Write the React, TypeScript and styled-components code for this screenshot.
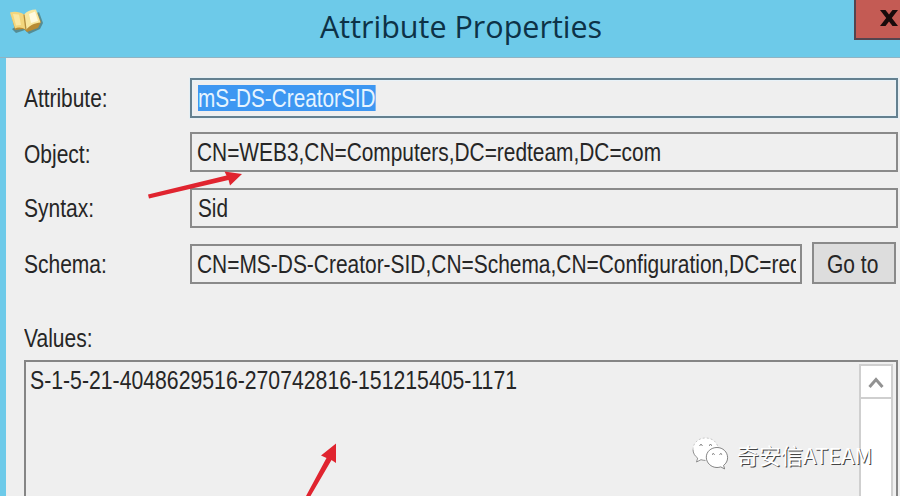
import React from 'react';
import styled, { createGlobalStyle } from 'styled-components';

const GlobalStyle = createGlobalStyle`
  * { box-sizing: border-box; }
  html, body { margin: 0; padding: 0; overflow: hidden; }
`;

const Window = styled.div`
  position: relative;
  width: 900px;
  height: 496px;
  overflow: hidden;
  display: flex;
  flex-direction: column;
  background: #6dcae9;
  font-family: 'Liberation Sans', Arial, sans-serif;
  font-size: 25px;
  color: #262626;
`;

const TitleBar = styled.header`
  flex: none;
  height: 58px;
  display: grid;
  grid-template-columns: 320px 1fr 46px;
  align-items: start;
  border-bottom: 1px solid #8fb4c4;
`;

const TitleIcon = styled.div`
  padding: 8px 0 0 9px;
  height: 40px;
`;

const Title = styled.h1`
  margin: 0;
  padding-top: 6px;
  font: 400 30.5px/41px 'Open Sans', 'Noto Sans', sans-serif;
  color: #0d3247;
  white-space: nowrap;
`;

const CloseButton = styled.button`
  width: 60px;
  height: 40px;
  margin: 0;
  padding: 10px 0 0 24px;
  border: 2px solid #54454f;
  border-top: 0;
  background: #c45b54;
  display: flex;
  align-items: flex-start;
  justify-content: flex-start;
`;

const Body = styled.main`
  flex: 1;
  margin-left: 6px;
  padding: 20px 2px 0 18px;
  background: #efefef;
  display: flex;
  flex-direction: column;
`;

const Row = styled.div<{ $gap: number }>`
  display: grid;
  grid-template-columns: 166px 1fr;
  height: 40px;
  margin-bottom: ${(p) => p.$gap}px;
`;

const Text = styled.span<{ $scale: number; $selected?: boolean }>`
  display: inline-block;
  transform: scaleX(${(p) => p.$scale});
  transform-origin: 0 50%;
  white-space: nowrap;
  line-height: 26px;
  height: 26px;
  color: ${(p) => (p.$selected ? '#e6f4ff' : 'inherit')};
  background: ${(p) => (p.$selected ? '#3d97f2' : 'transparent')};
`;

const Label = styled.label<{ $top: number }>`
  padding-top: ${(p) => p.$top}px;
  line-height: 0;
`;

const Field = styled.div<{ $focused?: boolean; $indent?: number }>`
  height: 40px;
  min-width: 0;
  padding: 5px 4px 0 ${(p) => p.$indent ?? 5}px;
  border: 2px solid ${(p) => (p.$focused ? '#64808f' : '#8a8a8a')};
  box-shadow: ${(p) => (p.$focused ? 'inset 0 0 0 1px #e8f2f8, 0 0 0 1px #e6f0f5' : 'none')};
`;

const Clip = styled.div`
  overflow: hidden;
  height: 29px;
  line-height: 0;
`;

const FieldWithButton = styled.div`
  display: grid;
  grid-template-columns: 612px 84px;
  column-gap: 10px;
  align-items: start;
`;

const GoButton = styled.button`
  height: 42px;
  margin: -2px 0 0;
  padding: 7px 0 0 13px;
  border: 2px solid #8a8a8a;
  background: #dddddd;
  font: inherit;
  color: inherit;
  line-height: 0;
  display: flex;
  align-items: flex-start;
  justify-content: flex-start;
`;

const ValuesLabel = styled.div`
  height: 76px;
  padding-top: 41px;
  line-height: 0;
`;

const ValuesBox = styled.div`
  flex: 1;
  display: flex;
  justify-content: space-between;
  padding: 2px 3px 0 4px;
  border: 2px solid #858585;
  border-bottom: 0;
`;

const ValueItem = styled.div`
  padding-top: 3px;
  line-height: 0;
`;

const ScrollBar = styled.div`
  width: 34px;
  flex: none;
  background: #fff;
  border: 2px solid #cfcfcf;
  border-bottom: 0;
`;

const ScrollUp = styled.div`
  height: 33px;
  padding-top: 2px;
  border-bottom: 2px solid #cfcfcf;
  display: flex;
  align-items: center;
  justify-content: center;
`;

const Annotations = styled.svg`
  position: absolute;
  inset: 0;
  pointer-events: none;
`;

const Watermark = styled.div`
  position: absolute;
  left: 690px;
  top: 435px;
  display: flex;
  align-items: flex-start;
  gap: 7px;
  color: #fff;
  font: 400 22px/38px 'Noto Sans CJK SC', sans-serif;
  white-space: nowrap;
  text-shadow: 1px 1px 0 #444;
`;

const BookIcon = () => (
  <svg width="36" height="30" viewBox="0 0 36 30">
    <path d="M3 21 7 25 16 22 20 26 31 21 34 15 30 4z" fill="#4d7775" opacity=".75" />
    <path d="M2 6 6 22 15 21 18 24 29 20 32 14 28 4 17 9z" fill="#b88b35" />
    <path d="M1 4.500C5 3 11 3.500 15 6.500L17 22C13 19 9 19 6 20.500z" fill="#f3d67d" />
    <path d="M15 6.500C18 3 22 1.500 27 1.500L31.500 14.500C26 15 21 17 17 22z" fill="#f8e7a0" />
    <path d="M20 6 26 3.500 29 13 22 15z" fill="#fffadf" />
    <path d="M4 6 10 6.500 12 17 7 17.500z" fill="#fae8a4" />
    <path d="M15 6.500 17 22" stroke="#b48d3c" strokeWidth="1.300" />
  </svg>
);

const WeChatIcon = () => (
  <svg width="40" height="38" viewBox="0 0 40 38">
    <path
      d="M15.500 3C8.500 3 3 8 3 14.500c0 3.500 1.800 6.500 4.700 8.600L6.500 27l4.500-2.300c1.500.5 3 .7 4.500.7 7 0 12.500-4.700 12.500-11S22.500 3 15.500 3z"
      fill="#fff"
    />
    <path d="M3 14.500c0 3.500 1.800 6.500 4.700 8.600L6.500 27l4.500-2.300c1.500.5 3 .7 4.500.7" fill="none" stroke="#777" strokeWidth=".8" />
    <path d="M3 14.500C3 8 8.500 3 15.500 3S26.500 7 28 12" fill="none" stroke="#aaa" strokeWidth=".6" strokeDasharray="2 2" />
    <path
      d="M27 12.500c-6 0-10.700 4.200-10.700 9.700S21 32.500 27 32.500c1.300 0 2.500-.2 3.700-.6l3.900 2-1-3.500c2.500-1.800 4-4.600 4-7.700 0-5.700-4.700-10.200-10.600-10.200z"
      fill="#fff" stroke="#666" strokeWidth=".8"
    />
    <path d="M9.500 10.500q1.500-2 3 0M19 10.500q1.500-2 3 0M22 19.500q1.300-1.800 2.600 0M29.500 19.500q1.300-1.800 2.600 0" fill="none" stroke="#666" />
  </svg>
);

export default function App() {
  return (
    <>
      <GlobalStyle />
      <Window>
        <TitleBar>
          <TitleIcon><BookIcon /></TitleIcon>
          <Title>Attribute Properties</Title>
          <CloseButton aria-label="Close">
            <svg width="18" height="16" viewBox="0 0 18 16">
              <path d="M0 0h5.500L9 4.500 12.500 0H18l-6.200 8L18 16h-5.500L9 11.500 5.500 16H0l6.200-8z" fill="#180b0b" />
            </svg>
          </CloseButton>
        </TitleBar>
        <Body>
          <Row $gap={14}>
            <Label $top={7}><Text $scale={0.835}>Attribute:</Text></Label>
            <Field $focused $indent={6}><Clip><Text $scale={0.83} $selected>mS-DS-CreatorSID</Text></Clip></Field>
          </Row>
          <Row $gap={16}>
            <Label $top={9}><Text $scale={0.84}>Object:</Text></Label>
            <Field><Clip><Text $scale={0.835}>CN=WEB3,CN=Computers,DC=redteam,DC=com</Text></Clip></Field>
          </Row>
          <Row $gap={16}>
            <Label $top={7}><Text $scale={0.84}>Syntax:</Text></Label>
            <Field $indent={6}><Clip><Text $scale={0.83}>Sid</Text></Clip></Field>
          </Row>
          <Row $gap={0}>
            <Label $top={7}><Text $scale={0.84}>Schema:</Text></Label>
            <FieldWithButton>
              <Field><Clip><Text $scale={0.837}>CN=MS-DS-Creator-SID,CN=Schema,CN=Configuration,DC=red</Text></Clip></Field>
              <GoButton><Text $scale={0.84}>Go to</Text></GoButton>
            </FieldWithButton>
          </Row>
          <ValuesLabel><Text $scale={0.84}>Values:</Text></ValuesLabel>
          <ValuesBox>
            <ValueItem><Text $scale={0.849}>S-1-5-21-4048629516-270742816-151215405-1171</Text></ValueItem>
            <ScrollBar>
              <ScrollUp>
                <svg width="16" height="12" viewBox="0 0 16 12">
                  <path d="M1.500 10 8 2.500 14.500 10" fill="none" stroke="#929292" strokeWidth="3" />
                </svg>
              </ScrollUp>
            </ScrollBar>
          </ValuesBox>
        </Body>
        <Annotations width="900" height="496" viewBox="0 0 900 496">
          <g fill="#e0242f">
            <path d="M148 194.500 149 198.500 228.500 180 230 185.500 242 174 224.500 171.500 226.500 175.500z" />
            <path d="M306 496 310.500 496 331.500 460 336 463 336 443.500 321 455.500 326.500 458z" />
          </g>
        </Annotations>
        <Watermark><WeChatIcon /><span>奇安信ATEAM</span></Watermark>
      </Window>
    </>
  );
}
